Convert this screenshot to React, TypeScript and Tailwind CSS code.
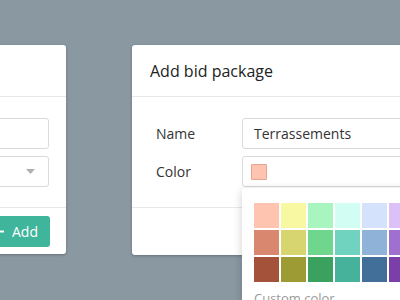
const SWATCHES = [
  ["#ffc4b0", "#f8f7a2", "#a9f5bf", "#d2fdf3", "#d4e3fb", "#dcc1f8"],
  ["#d9876f", "#d6d56f", "#6fd68e", "#6fd3c0", "#8fb3d8", "#a070d0"],
  ["#a4523a", "#9d9c34", "#3aa25e", "#46b29c", "#426f9a", "#7a3fa8"],
];

function PlusIcon() {
  return (
    <svg width="11" height="11" viewBox="0 0 11 11" aria-hidden="true">
      <rect x="0" y="4.5" width="11" height="2" fill="white" />
      <rect x="4.5" y="0" width="2" height="11" fill="white" />
    </svg>
  );
}

export default function App() {
  return (
    <div
      className="relative h-[300px] w-[400px] overflow-hidden bg-[#8a98a2] text-[#333]"
      style={{ fontFamily: '"Open Sans", "Noto Sans", sans-serif' }}
    >
      <div className="flex items-start pt-[45px]">
        {/* Left (previous) dialog, mostly off-screen */}
        <div className="ml-[-234px] w-[300px] shrink-0 rounded-[3px] bg-white shadow-[0_1px_3px_rgba(0,0,0,0.25)]">
          <div className="h-[52px] border-b border-[#e8e8e8]" />
          <div className="flex flex-col gap-[7px] px-[17px] pt-[21px] pb-[20px]">
            <div className="h-[31px] rounded-[3px] border border-[#dadada]" />
            <div className="flex h-[31px] items-center justify-end rounded-[3px] border border-[#dadada] pr-[13px]">
              <svg width="9" height="5" viewBox="0 0 9 5" aria-hidden="true">
                <path d="M0 0h9L4.5 5z" fill="#b0b0b0" />
              </svg>
            </div>
          </div>
          <div className="flex h-[47px] items-center justify-end border-t border-[#e8e8e8] px-[16px]">
            <button className="flex h-[31px] items-center gap-[8px] rounded-[3px] bg-[#3fb59b] pr-[12px] pl-[20px] text-[14px] text-white">
              <PlusIcon />
              Add
            </button>
          </div>
        </div>

        {/* Add bid package dialog */}
        <div className="relative ml-[66px] w-[300px] shrink-0 rounded-[3px] bg-white shadow-[0_1px_3px_rgba(0,0,0,0.25)]">
          <div className="flex h-[52px] items-center border-b border-[#e8e8e8] pl-[18px] text-[16px] text-[#222]">
            Add bid package
          </div>
          <div className="grid grid-cols-[86px_1fr] items-center gap-y-[7px] px-[24px] pt-[21px] pb-[20px] text-[14px]">
            <span>Name</span>
            <div className="flex h-[31px] items-center rounded-[3px] border border-[#dadada] pl-[11px]">
              Terrassements
            </div>
            <span>Color</span>
            <div className="flex h-[31px] items-center rounded-[3px] border border-[#dadada] pl-[8px]">
              <span className="h-[16px] w-[16px] rounded-[1px] border border-[#e6a592] bg-[#ffc4b0]" />
            </div>
          </div>
          <div className="h-[48px] border-t border-[#e8e8e8]" />

          {/* Color picker popover */}
          <div className="absolute top-[143px] left-[110px] z-10 w-[200px] rounded-[3px] bg-white pt-[15px] pl-[12px] shadow-[0_2px_8px_rgba(0,0,0,0.2)]">
            <div className="grid grid-cols-[repeat(6,25px)] gap-[2px]">
              {SWATCHES.flat().map((c, i) => (
                <span key={i} className="h-[25px] w-[25px]" style={{ backgroundColor: c }} />
              ))}
            </div>
            <div className="mt-[7px] pb-[10px] text-[13px] text-[#9a9a9a]">Custom color</div>
          </div>
        </div>
      </div>
    </div>
  );
}
